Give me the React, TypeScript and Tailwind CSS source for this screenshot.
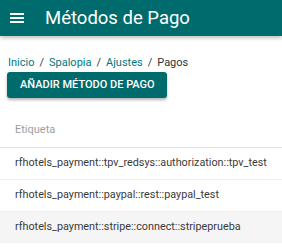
const rows = [
  "rfhotels_payment::tpv_redsys::authorization::tpv_test",
  "rfhotels_payment::paypal::rest::paypal_test",
  "rfhotels_payment::stripe::connect::stripeprueba",
];

const crumbs = ["Inicio", "Spalopia", "Ajustes"];

export default function App() {
  return (
    <div className="w-[282px] h-[248px] overflow-hidden bg-white font-['Roboto',sans-serif]">
      <header className="h-9 bg-[#006b6d] flex items-center shadow-[0_2px_4px_rgba(0,0,0,0.25)] relative">
        <svg width="14" height="10" viewBox="0 0 14 10" className="ml-[10px]">
          <rect y="0" width="14" height="2" fill="white" />
          <rect y="4" width="14" height="2" fill="white" />
          <rect y="8" width="14" height="2" fill="white" />
        </svg>
        <h1 className="ml-[21px] text-white text-[18.5px] leading-none">Métodos de Pago</h1>
      </header>

      <div className="px-2 pt-[19px]">
        <nav className="text-[11px] leading-4 text-[#333]">
          {crumbs.map((c) => (
            <span key={c}>
              <span className="text-[#00787a]">{c}</span>
              <span className="mx-[5px]">/</span>
            </span>
          ))}
          <span>Pagos</span>
        </nav>

        <button className="mt-px -ml-px h-[26px] pl-[13px] pr-3 rounded-[3px] bg-[#006b6d] text-white text-[11px] font-medium shadow-[0_2px_3px_rgba(0,0,0,0.3)]">
          AÑADIR MÉTODO DE PAGO
        </button>
      </div>

      <table className="mt-[15px] w-full text-[10.8px]">
        <thead>
          <tr className="border-b border-[#e0e0e0] h-[34px]">
            <th className="text-left font-normal text-[#9e9e9e] pl-[15px] text-[11px]">Etiqueta</th>
          </tr>
        </thead>
        <tbody>
          {rows.map((r, i) => (
            <tr
              key={r}
              className={
                i === rows.length - 1
                  ? "h-8 bg-[#f5f5f5]"
                  : "h-8 border-b border-[#f0f0f0]"
              }
            >
              <td className="pl-[15px] text-[#3a3a3a] whitespace-nowrap">{r}</td>
            </tr>
          ))}
        </tbody>
      </table>
    </div>
  );
}
